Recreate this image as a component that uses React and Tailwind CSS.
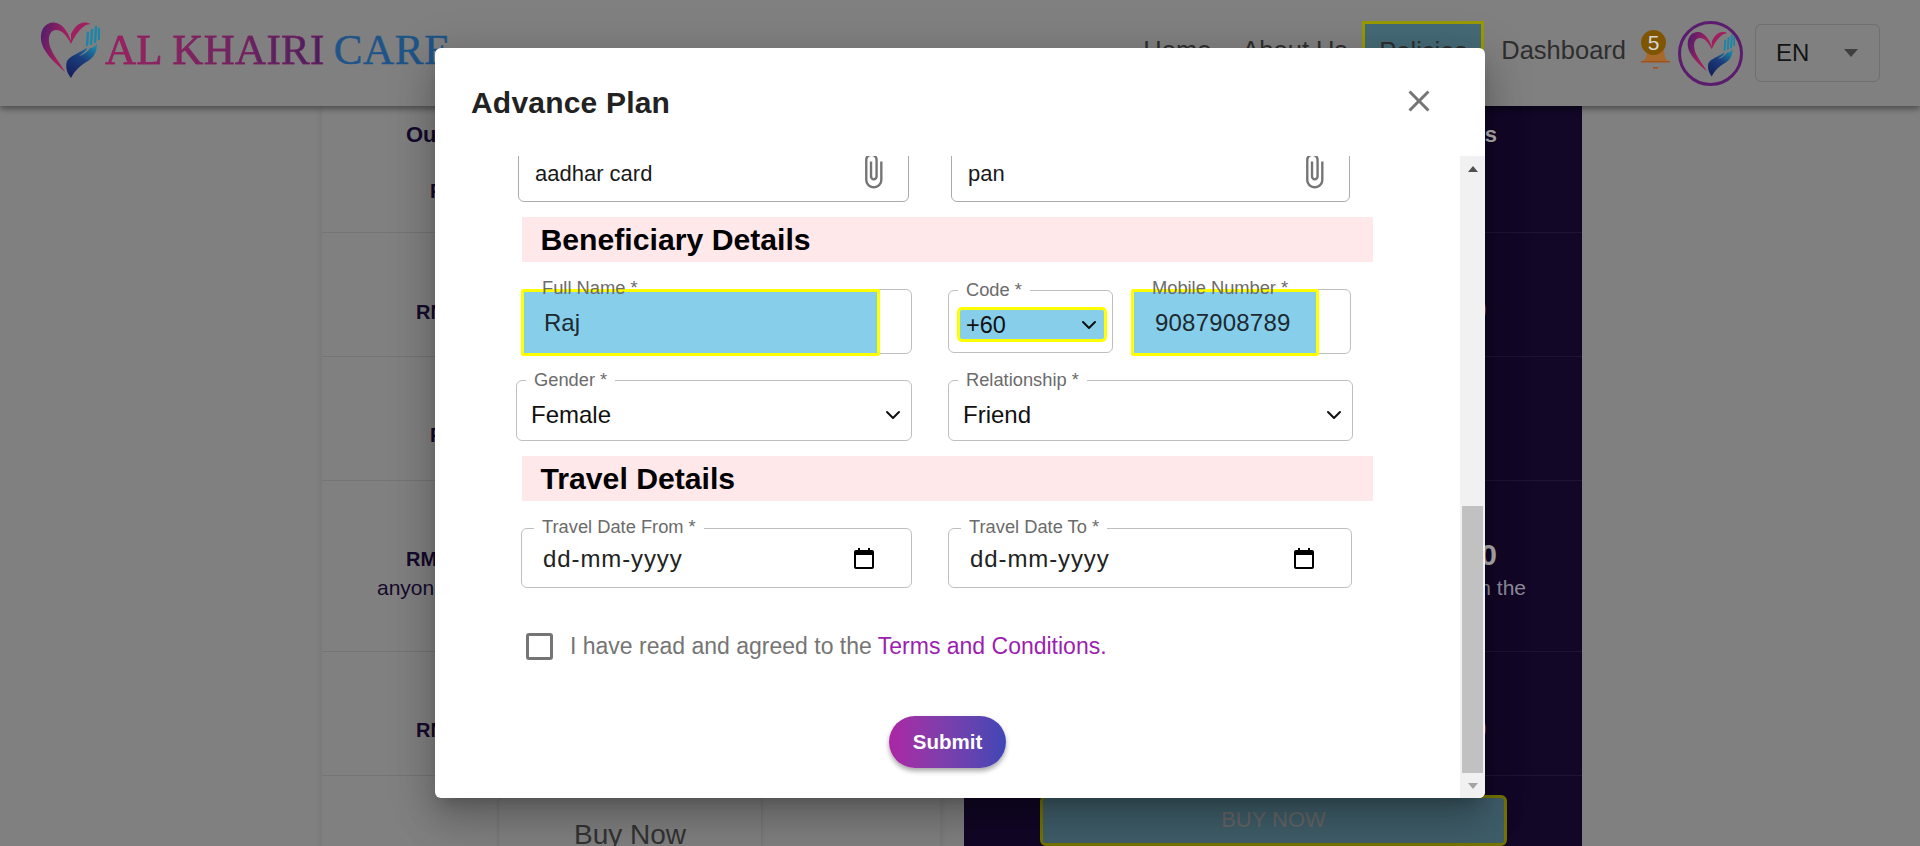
import React from 'react';
import { ChevronDown } from 'lucide-react';

const HeartMark = ({ className }) => (
  <svg viewBox="0 0 60 56" className={className}>
    <defs>
      <linearGradient id="heartGrad" x1="0" y1="0" x2="1" y2="0.3">
        <stop offset="0" stopColor="#4a1d6b" />
        <stop offset="0.5" stopColor="#a01f5f" />
        <stop offset="1" stopColor="#a01f5f" />
      </linearGradient>
      <linearGradient id="handGrad" x1="0.2" y1="1" x2="0.8" y2="0">
        <stop offset="0" stopColor="#141f5c" />
        <stop offset="0.55" stopColor="#1b3d7c" />
        <stop offset="1" stopColor="#1d86a8" />
      </linearGradient>
    </defs>
    <path
      fill="url(#heartGrad)"
      d="M31 19C28 9 21 0 13 .5 4 1 0 9 1 18c1 11 13 22 24 32-6-11-15-20-16-30-.7-7 2-12 7-12 6 0 11 6 15 14 3-7 8-15 15-19l4-1c-1-1-3-1.500-5-1.500C38 .5 34 6 31 12z"
    />
    <path
      fill="url(#handGrad)"
      d="M31 56c-4-5-6-11-4-17 3-5 12-8 18-12l2-1c0 3-4 5-8 8 5-1 9-5 11-8 3 0 5-2 7-4 0 8-3 13-9 17-7 4-13 9-17 17z"
    />
    <path d="M47 23l1-12M51 22l1-14M55 20l1-15M59 17V7" stroke="#1d86a8" strokeWidth="2.500" strokeLinecap="round" fill="none" />
  </svg>
);

const AttachIcon = ({ className }) => (
  <svg viewBox="0 0 24 24" className={className} fill="#757575">
    <path d="M16.500 6v11.500c0 2.210-1.790 4-4 4s-4-1.790-4-4V5c0-1.380 1.120-2.500 2.500-2.500s2.500 1.120 2.500 2.500v10.500c0 .55-.45 1-1 1s-1-.45-1-1V6H10v9.500c0 1.380 1.120 2.500 2.500 2.500s2.500-1.120 2.500-2.500V5c0-2.210-1.790-4-4-4S7 2.790 7 5v12.500c0 3.040 2.460 5.500 5.500 5.500s5.500-2.460 5.500-5.500V6h-1.500z" />
  </svg>
);

const CalendarIcon = () => (
  <svg viewBox="0 0 20 21" className="w-5 h-[21px] shrink-0">
    <path d="M4 0h2v3H4zM14 0h2v3h-2z" fill="#000" />
    <rect x="1" y="3" width="18" height="17" rx="1" fill="none" stroke="#000" strokeWidth="2" />
    <rect x="1" y="3" width="18" height="4" fill="#000" />
  </svg>
);

// outlined box with the little label sitting on its top edge
const Field = ({ label, labelClass, className, children }) => (
  <div className={`relative shrink-0 border border-[#bfbfbf] rounded-[6px] bg-white ${className}`}>
    {children}
    <span className={`absolute text-[18.300px] leading-[20px] text-[#6b6b6b] whitespace-nowrap ${labelClass}`}>{label}</span>
  </div>
);

const Highlighted = ({ value, className }) => (
  <input
    readOnly
    value={value}
    className={`h-[67px] -mt-px border-[3px] border-[#ffff00] bg-[#87ceeb] text-[24px] text-[#1c2a30] outline-none rounded-[2px] ${className}`}
  />
);

const SelectField = ({ label, value, className, labelClass, textClass }) => (
  <Field label={label} className={`h-[61px] ${className}`} labelClass={labelClass}>
    <div className={`flex items-center justify-between h-full pt-[8px] text-[24px] text-[#111] ${textClass}`}>
      <span>{value}</span>
      <ChevronDown size={24} strokeWidth={2} color="#111" />
    </div>
  </Field>
);

const DateField = ({ label, className, labelClass, textClass }) => (
  <Field label={label} className={`h-[60px] ${className}`} labelClass={labelClass}>
    <div className={`flex items-center justify-between h-full pt-[1px] ${textClass}`}>
      <span className="text-[24px] tracking-[0.9px] text-[#222]">dd-mm-yyyy</span>
      <CalendarIcon />
    </div>
  </Field>
);

const SectionBar = ({ children, className }) => (
  <div className={`ml-[87px] w-[851px] h-[45px] flex items-center pl-[18.500px] bg-[#ffe8ea] text-[30.200px] font-bold text-black ${className}`}>
    {children}
  </div>
);

const FileBox = ({ name, className }) => (
  <div className={`flex items-center justify-between h-[62px] pt-[5px] border border-[#ababab] rounded-[6px] text-[22px] text-[#1a1a1a] ${className}`}>
    <span>{name}</span>
    <AttachIcon className="w-[38px] h-[38px] -mt-[6px] -mr-[2px]" />
  </div>
);

const leftRows = [
  { h: 'h-[127px] pt-[12px]', lines: [['Outpatient', 'pl-[84px] font-bold text-[22px]'], ['RM 250', 'pl-[108px] font-bold mt-[25px]']] },
  { h: 'h-[124px] pt-[64px]', lines: [['RM 1,000', 'pl-[94px] font-bold']] },
  { h: 'h-[124px] pt-[63px]', lines: [['RM 100', 'pl-[108px] font-bold']] },
  { h: 'h-[171px] pt-[63px]', lines: [['RM 100,000', 'pl-[84px] font-bold'], ['anyone', 'pl-[55px] text-[21px] -mt-[2px]']] },
  { h: 'h-[124px] pt-[63px]', lines: [['RM 1,000', 'pl-[94px] font-bold']] },
];

const rightRows = [
  { h: 'h-[127px] pt-[12px]', lines: [['Benefits', 'pr-[85px] font-bold text-[22px] text-[#b0b0b0]']] },
  { h: 'h-[124px] pt-[54px]', lines: [['RM 2,000', 'pr-[95px] text-[30px] font-bold text-[#6e5a4a]']] },
  { h: 'h-[124px]', lines: [] },
  { h: 'h-[171px] pt-[51px]', lines: [['RM 200,000', 'pr-[85px] text-[30px] font-bold text-[#b0b0b0]'], ['in the', 'pr-[56px] text-[21px] -mt-[5px] text-[#8d8d9d]']] },
  { h: 'h-[124px] pt-[54px]', lines: [['RM 2,000', 'pr-[95px] text-[30px] font-bold text-[#6e5a4a]']] },
];

const Modal = () => (
  <div className="absolute left-[435px] top-[48px] w-[1050px] h-[750px] bg-white rounded-[6px] flex flex-col overflow-hidden shadow-[0_11px_15px_-7px_rgba(0,0,0,0.2),0_24px_38px_3px_rgba(0,0,0,0.14),0_9px_46px_8px_rgba(0,0,0,0.12)]">
    <div className="h-[108px] shrink-0 flex items-center justify-between pl-[36px] pr-[48px]">
      <h2 className="text-[30px] font-bold text-[#222] tracking-[0.2px]">Advance Plan</h2>
      <svg viewBox="0 0 24 24" className="w-[36px] h-[36px] -mt-[2px]" fill="#757575">
        <path d="M19 6.410 17.590 5 12 10.590 6.410 5 5 6.410 10.590 12 5 17.590 6.410 19 12 13.410 17.590 19 19 17.590 13.410 12z" />
      </svg>
    </div>

    <div className="flex-1 flex min-h-0">
      <div className="flex-1 overflow-hidden">
        <div className="flex -mt-[16px] ml-[83px] gap-[42px]">
          <FileBox name="aadhar card" className="w-[391px] pl-[16px] pr-[18px]" />
          <FileBox name="pan" className="w-[399px] pl-[16px] pr-[18px]" />
        </div>

        <SectionBar className="mt-[15px]">Beneficiary Details</SectionBar>

        <div className="flex mt-[27px] ml-[87px]">
          <Field label="Full Name *" className="w-[390px] h-[65px]" labelClass="left-[19px] -top-[12px]">
            <Highlighted value="Raj" className="-ml-[2px] w-[359px] pl-[20px]" />
          </Field>
          <Field label="Code *" className="w-[165px] h-[63px] mt-px ml-[36px]" labelClass="left-[9px] -top-[11px] px-2 bg-white">
            <div className="flex items-center justify-between mt-[16px] ml-[8px] w-[150px] h-[35px] pl-[6px] pr-[3px] pt-[2px] border-[3px] border-[#ffff00] rounded-[5px] bg-[#87ceeb] text-[23.500px] text-[#111]">
              <span>+60</span>
              <ChevronDown size={24} strokeWidth={2} color="#111" className="-mt-[2px]" />
            </div>
          </Field>
          <Field label="Mobile Number *" className="w-[220px] h-[65px] ml-[18px]" labelClass="left-[20px] -top-[12px]">
            <Highlighted value="9087908789" className="-ml-px w-[188px] pl-[21px] tracking-[0.2px]" />
          </Field>
        </div>

        <div className="flex mt-[26px] ml-[81px]">
          <SelectField label="Gender *" value="Female" className="w-[396px]" labelClass="left-[9px] -top-[11px] px-2 bg-white" textClass="pl-[14px] pr-[6px]" />
          <SelectField label="Relationship *" value="Friend" className="w-[405px] ml-[36px]" labelClass="left-[9px] -top-[11px] px-2 bg-white" textClass="pl-[14px] pr-[6px]" />
        </div>

        <SectionBar className="mt-[15px]">Travel Details</SectionBar>

        <div className="flex mt-[27px] ml-[86px]">
          <DateField label="Travel Date From *" className="w-[391px]" labelClass="left-[12px] -top-[12px] px-2 bg-white" textClass="pl-[21px] pr-[37px]" />
          <DateField label="Travel Date To *" className="w-[404px] ml-[36px]" labelClass="left-[12px] -top-[12px] px-2 bg-white" textClass="pl-[21px] pr-[37px]" />
        </div>

        <div className="flex items-center mt-[45px] ml-[91px] h-[27px]">
          <input type="checkbox" className="appearance-none w-[27px] h-[27px] border-[3px] border-[#757575] rounded-[3px]" />
          <p className="ml-[17px] text-[23px] text-[#757575] whitespace-nowrap">
            I have read and agreed to the <span className="text-[#9c1eb0]">Terms and Conditions.</span>
          </p>
        </div>

        <div className="flex justify-center mt-[56px] pr-[6px] pl-[6px]">
          <button className="w-[117px] h-[52px] rounded-full bg-linear-to-r from-[#ab25a4] to-[#3f46b5] text-white text-[20.500px] font-bold shadow-[0_3px_5px_rgba(0,0,0,0.35)]">
            Submit
          </button>
        </div>
      </div>

      {/* scrollbar */}
      <div className="w-[25px] shrink-0 bg-[#f1f1f1] flex flex-col items-center">
        <div className="h-[25px] flex items-center justify-center">
          <div className="w-0 h-0 border-x-[5.500px] border-x-transparent border-b-[6px] border-b-[#505050]" />
        </div>
        <div className="flex-1" />
        <div className="w-[21px] h-[267px] bg-[#c1c1c1]" />
        <div className="h-[25px] flex items-center justify-center">
          <div className="w-0 h-0 border-x-[5.500px] border-x-transparent border-t-[6px] border-t-[#a3a3a3]" />
        </div>
      </div>
    </div>
  </div>
);

export default function App() {
  return (
    <div className="relative w-[1920px] h-[846px] overflow-hidden bg-[#808080] font-['Liberation_Sans',Arial,sans-serif]">
      <header className="relative h-[106px] flex justify-between bg-[#808080] shadow-[0_3px_6px_rgba(0,0,0,0.4)] text-[25.500px] text-[#2e2e2e]">
        <div className="flex items-start pl-[40px] pt-[22px]">
          <HeartMark className="w-[60px] h-[56px]" />
          <span className="ml-[5px] mt-[3px] text-[43px] leading-[50px] whitespace-nowrap font-['Liberation_Serif',serif]">
            <span className="tracking-[0.3px] [-webkit-text-stroke:0.5px_#8a2060] bg-linear-to-r from-[#a01f5f] to-[#43205f] bg-clip-text text-transparent">AL KHAIRI</span>
            <span className="ml-[9px] tracking-[0.7px] [-webkit-text-stroke:0.5px_#1f5488] text-[#1f5488]">CARE</span>
          </span>
        </div>
        <nav className="flex items-start pr-[40px]">
          <span className="mt-[31px]">Home</span>
          <span className="mt-[31px] ml-[31px]">About Us</span>
          <span className="mt-[21px] ml-[15px] w-[122px] h-[60px] flex items-center justify-center border-[3px] border-[#999900] bg-[#456a76]">Policies</span>
          <span className="mt-[31px] ml-[17px]">Dashboard</span>
          <div className="relative mt-[30px] ml-[15px] w-[29px] h-[40px]">
            <svg viewBox="0 0 29 40" className="absolute inset-0 w-[29px] h-[40px]">
              <path d="M7 14h15l2 14 4 4H1l4-4z" fill="#a8682a" />
              <rect x="0" y="31" width="29" height="1.500" fill="#a3501c" />
              <rect x="12" y="37" width="5" height="1.500" fill="#a3501c" />
            </svg>
            <span className="absolute left-0 top-0 w-[25px] h-[25px] rounded-full bg-[#7f5500] text-[#d6d6d6] text-[21px] leading-[25px] text-center">5</span>
          </div>
          <div className="mt-[21px] ml-[8px] w-[65px] h-[65px] rounded-full border-[3px] border-[#5b1c6e] flex items-center justify-center">
            <HeartMark className="w-[48px] h-[48px]" />
          </div>
          <div className="mt-[24px] ml-[12px] w-[125px] h-[58px] flex items-center justify-between pl-[20px] pr-[21px] border border-[#6f6f6f] rounded-[6px] text-[24px] text-[#141414]">
            <span>EN</span>
            <div className="w-0 h-0 border-x-[7px] border-x-transparent border-t-[8px] border-t-[#3f3f3f]" />
          </div>
        </nav>
      </header>

      <main className="flex pl-[322px] gap-[24px] text-[20px]">
        <section className="w-[618px] text-[#150a2c] shadow-[0_0_8px_rgba(0,0,0,0.1)]">
          {leftRows.map((row, i) => (
            <div key={i} className={`border-b border-[#747474] ${row.h}`}>
              {row.lines.map(([text, cls]) => (
                <div key={text} className={cls}>{text}</div>
              ))}
            </div>
          ))}
          <div className="mt-[20px] ml-[177px] w-[262px] h-[60px] rounded-t-[8px] pt-[18px] text-center text-[28px] text-[#333] shadow-[0_0_4px_rgba(0,0,0,0.15)]">
            Buy Now
          </div>
        </section>
        <section className="w-[618px] h-[740px] bg-[#120726] text-right">
          {rightRows.map((row, i) => (
            <div key={i} className={`border-b border-[#1f1433] ${row.h}`}>
              {row.lines.map(([text, cls]) => (
                <div key={text} className={cls}>{text}</div>
              ))}
            </div>
          ))}
          <div className="mt-[19px] ml-[76px] w-[467px] h-[51px] flex items-center justify-center pb-[3px] border-[3px] border-[#757500] rounded-[6px] bg-[#3f5e6a] text-[22px] text-[#666]">
            BUY NOW
          </div>
        </section>
      </main>

      <Modal />
    </div>
  );
}
